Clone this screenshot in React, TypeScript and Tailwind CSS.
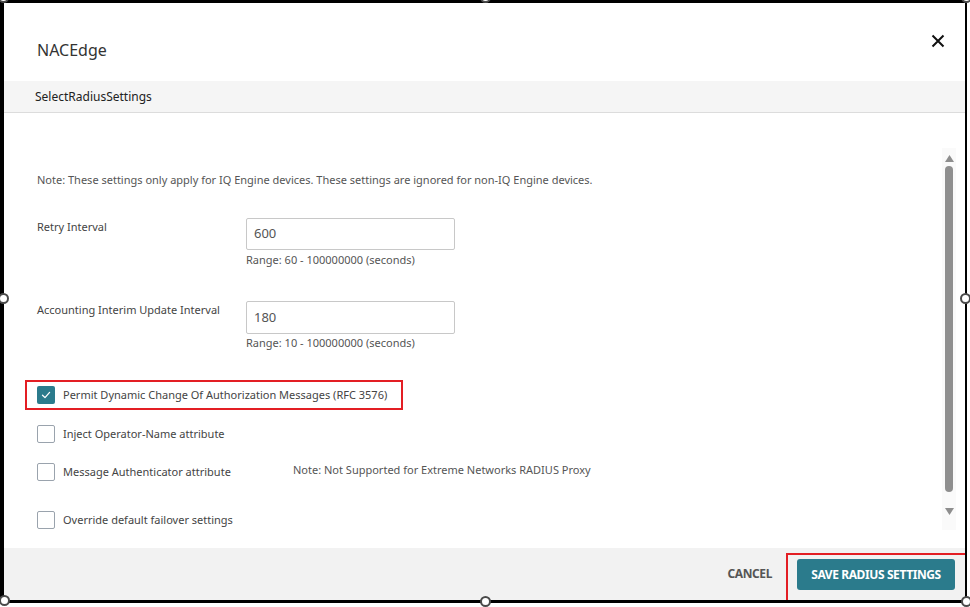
import React from "react";

function Handle({ className }: { className: string }) {
  return (
    <div
      className={
        "absolute w-[11px] h-[11px] rounded-full bg-white border-2 border-[#4a4a4a] " +
        className
      }
    />
  );
}

function Box({ checked }: { checked?: boolean }) {
  if (checked) {
    return (
      <div className="w-[18px] h-[18px] rounded-[2px] bg-[#2b7b8c] flex items-center justify-center shrink-0">
        <svg width="12" height="12" viewBox="0 0 12 12" fill="none">
          <path d="M2.5 6.2 L5 8.6 L9.6 3.4" stroke="white" strokeWidth="1.3" strokeLinecap="round" strokeLinejoin="round" />
        </svg>
      </div>
    );
  }
  return <div className="w-[18px] h-[18px] rounded-[2px] border border-[#9aa3ad] bg-white shrink-0" />;
}

export default function App() {
  return (
    <div
      className="relative w-[970px] h-[607px] bg-white overflow-hidden"
      style={{ fontFamily: '"Noto Sans", "Open Sans", sans-serif' }}
    >
      <div className="w-[967px] h-[603px] border-l-4 border-t-[3px] border-r-[2px] border-b-[3px] border-black flex flex-col bg-white">
        {/* header */}
        <div className="h-[78px] shrink-0 flex items-start justify-between pl-[33px] pr-[20px]">
          <div className="mt-[36px] text-[16px] leading-[22px] text-[#333]">NACEdge</div>
          <svg className="mt-[31px]" width="14" height="14" viewBox="0 0 14 14">
            <path d="M1.5 1.5 L12.5 12.5 M12.5 1.5 L1.5 12.5" stroke="#111" strokeWidth="2" />
          </svg>
        </div>
        {/* sub header */}
        <div className="h-[32px] shrink-0 bg-[#f5f5f5] border-b border-[#dcdcdc] flex items-center pl-[31px]">
          <span className="text-[12px] text-[#222]">SelectRadiusSettings</span>
        </div>
        {/* body */}
        <div className="flex-1 flex min-h-0">
          <div className="flex-1 pl-[33px] pt-[59px] text-[11px] text-[#444]">
            <div className="leading-[16px] text-[#555]">
              Note: These settings only apply for IQ Engine devices. These settings are ignored for non-IQ Engine devices.
            </div>
            <div className="mt-[30px] flex">
              <div className="w-[209px] leading-[16px] pt-[1px]">Retry Interval</div>
              <div>
                <div className="w-[209px] h-[32px] border border-[#c8c8c8] rounded-[2px] flex items-center pl-[7px] text-[13px] text-[#555]">600</div>
                <div className="mt-[2px] leading-[16px] text-[#555]">Range: 60 - 100000000 (seconds)</div>
              </div>
            </div>
            <div className="mt-[33px] flex">
              <div className="w-[209px] leading-[16px] pt-[1px]">Accounting Interim Update Interval</div>
              <div>
                <div className="w-[209px] h-[33px] border border-[#c8c8c8] rounded-[2px] flex items-center pl-[7px] text-[13px] text-[#555]">180</div>
                <div className="mt-[1px] leading-[16px] text-[#555]">Range: 10 - 100000000 (seconds)</div>
              </div>
            </div>
            <div className="mt-[29px] ml-[-12px] w-[378px] h-[30px] border-2 border-[#e31e24] flex items-center pl-[10px] gap-[8px]">
              <Box checked />
              <span className="leading-[16px]">Permit Dynamic Change Of Authorization Messages (RFC 3576)</span>
            </div>
            <div className="mt-[14px] flex items-center gap-[8px] h-[19px]">
              <Box />
              <span className="leading-[16px]">Inject Operator-Name attribute</span>
            </div>
            <div className="mt-[19px] flex items-center h-[19px]">
              <div className="w-[256px] flex items-center gap-[8px]">
                <Box />
                <span className="leading-[16px]">Message Authenticator attribute</span>
              </div>
              <span className="leading-[16px] text-[#555] -mt-[3px]">Note: Not Supported for Extreme Networks RADIUS Proxy</span>
            </div>
            <div className="mt-[29px] flex items-center gap-[8px] h-[19px]">
              <Box />
              <span className="leading-[16px]">Override default failover settings</span>
            </div>
          </div>
          {/* scrollbar */}
          <div className="w-[14px] mr-[9px] mt-[35px] h-[382px] bg-[#fafafa] flex flex-col items-center">
            <svg className="mt-[7px]" width="9" height="7" viewBox="0 0 9 7">
              <path d="M4.5 0 L9 7 L0 7 Z" fill="#8e8e8e" />
            </svg>
            <div className="mt-[4px] w-[8px] h-[326px] rounded-full bg-[#8f8f8f]" />
            <svg className="mt-[16px]" width="9" height="7" viewBox="0 0 9 7">
              <path d="M0 0 L9 0 L4.5 7 Z" fill="#8e8e8e" />
            </svg>
          </div>
        </div>
        {/* footer */}
        <div className="h-[52px] shrink-0 bg-[#f2f2f2] flex items-start justify-end">
          <div className="mt-[18px] mr-[14px] text-[12px] font-bold text-[#555] leading-[16px] tracking-[-0.4px]">CANCEL</div>
          <div className="mt-[5px] h-[47px] border-2 border-b-0 border-r-0 border-[#e31e24] pl-[9px] pr-[10px] pt-[4px]">
            <div className="w-[158px] h-[31px] rounded-[3px] bg-[#2b7b8c] flex items-center justify-center text-white text-[12px] font-bold tracking-[-0.4px]">
              SAVE RADIUS SETTINGS
            </div>
          </div>
        </div>
      </div>
      <Handle className="left-[-2px] top-[-8px]" />
      <Handle className="left-[480px] top-[-8px]" />
      <Handle className="left-[961px] top-[-8px]" />
      <Handle className="left-[-2px] top-[293px]" />
      <Handle className="left-[960px] top-[293px]" />
      <Handle className="left-[-1px] top-[595px]" />
      <Handle className="left-[480px] top-[596px]" />
      <Handle className="left-[961px] top-[596px]" />
    </div>
  );
}
